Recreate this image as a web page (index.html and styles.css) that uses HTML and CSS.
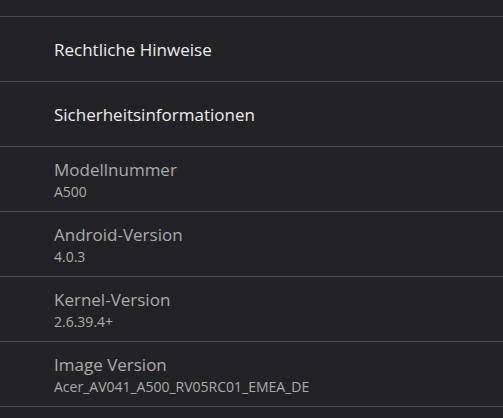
FILE: index.html
```html
<!DOCTYPE html>
<html>
<head>
<meta charset="utf-8">
<link rel="stylesheet" href="styles.css">
</head>
<body>
<div class="list">
  <div class="top"></div>
  <div class="row"><div class="title">Rechtliche Hinweise</div></div>
  <div class="row"><div class="title">Sicherheitsinformationen</div></div>
  <div class="row dim"><div class="title">Modellnummer</div><div class="summary">A500</div></div>
  <div class="row dim"><div class="title">Android-Version</div><div class="summary">4.0.3</div></div>
  <div class="row dim"><div class="title">Kernel-Version</div><div class="summary">2.6.39.4+</div></div>
  <div class="row dim"><div class="title">Image Version</div><div class="summary">Acer_AV041_A500_RV05RC01_EMEA_DE</div></div>
  <div class="end"></div>
</div>
</body>
</html>
```

FILE: styles.css
```css
html, body {
  margin: 0;
  padding: 0;
  background: #222226;
  overflow: hidden;
}
body {
  width: 503px;
  height: 418px;
  font-family: "Open Sans", "Noto Sans", sans-serif;
}
.list {
  display: flex;
  flex-direction: column;
}
.top {
  height: 16px;
}
.end {
  height: 10px;
  border-top: 1px solid #48484c;
}
.row {
  height: 64px;
  flex: none;
  border-top: 1px solid #48484c;
  padding-left: 54px;
  display: flex;
  flex-direction: column;
  justify-content: center;
}
.title {
  font-size: 17px;
  color: #ececec;
  line-height: 24px;
  padding-top: 1px;
}
.dim .title {
  color: #aaaaaa;
  padding-top: 0;
}
.summary {
  font-size: 14px;
  color: #aaaaaa;
  line-height: 19px;
}
```
